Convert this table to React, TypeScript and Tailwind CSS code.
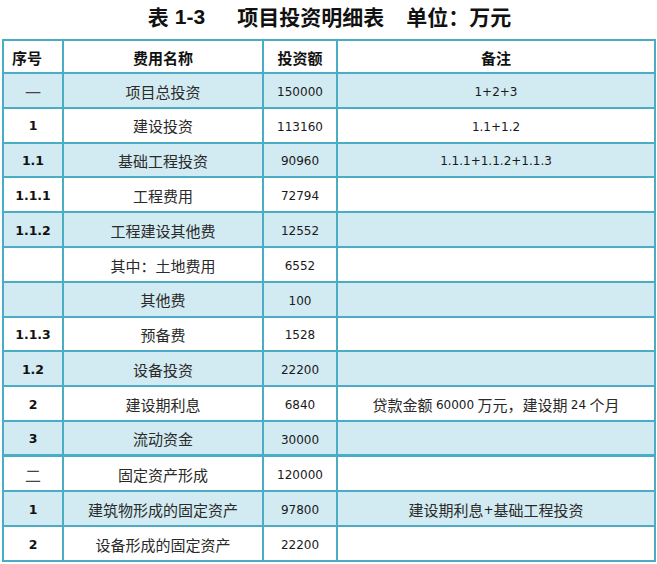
import React from "react";

type Row = { no: string; name: string; amt: string; note: string; shade: boolean; cjkNo?: boolean; thick?: boolean };

const rows: Row[] = [
  { no: "一", name: "项目总投资", amt: "150000", note: "1+2+3", shade: true, cjkNo: true },
  { no: "1", name: "建设投资", amt: "113160", note: "1.1+1.2", shade: false },
  { no: "1.1", name: "基础工程投资", amt: "90960", note: "1.1.1+1.1.2+1.1.3", shade: true },
  { no: "1.1.1", name: "工程费用", amt: "72794", note: "", shade: false },
  { no: "1.1.2", name: "工程建设其他费", amt: "12552", note: "", shade: true },
  { no: "", name: "其中：土地费用", amt: "6552", note: "", shade: false },
  { no: "", name: "其他费", amt: "100", note: "", shade: true },
  { no: "1.1.3", name: "预备费", amt: "1528", note: "", shade: false },
  { no: "1.2", name: "设备投资", amt: "22200", note: "", shade: true },
  { no: "2", name: "建设期利息", amt: "6840", note: "贷款金额 60000 万元，建设期 24 个月", shade: false },
  { no: "3", name: "流动资金", amt: "30000", note: "", shade: true, thick: true },
  { no: "二", name: "固定资产形成", amt: "120000", note: "", shade: false, cjkNo: true },
  { no: "1", name: "建筑物形成的固定资产", amt: "97800", note: "建设期利息+基础工程投资", shade: true },
  { no: "2", name: "设备形成的固定资产", amt: "22200", note: "", shade: false },
];

const cjk = "font-['Noto_Sans_CJK_SC',sans-serif]";
const num = "font-['DejaVu_Sans',sans-serif]";

function renderNote(note: string) {
  const parts = note.split(/([0-9.+]+)/).filter((p) => p !== "");
  return parts.map((p, i) =>
    /^[0-9.+]+$/.test(p) ? (
      <span key={i} className={`${num} text-[12px] text-[#1a1a1a]`}>
        {p}
      </span>
    ) : (
      <span key={i} className={`${cjk} text-[15px] text-[#2a2a2a]`}>
        {p}
      </span>
    )
  );
}

export default function App() {
  return (
    <div className="w-[657px] h-[564px] bg-white overflow-hidden">
      <div className="h-[39px] flex items-center justify-center pb-[5px] text-[21px] font-bold text-[#111] pl-[2px]">
        <span className={`${cjk}`}>表</span>
        <span className="font-['Liberation_Sans',sans-serif] ml-[6px]">1-3</span>
        <span className={`${cjk} ml-[32px]`}>项目投资明细表</span>
        <span className={`${cjk} ml-[22px]`}>单位：万元</span>
      </div>
      <div className="ml-[2px] w-[654px] border-2 border-[#4bacc6] grid grid-cols-[60px_200px_74px_316px]">
        <div className={`h-[33px] pt-[3px] border-r-2 border-b-2 border-[#4bacc6] flex items-center pl-[8px] ${cjk} font-bold text-[15px] text-[#111]`}>序号</div>
        <div className={`h-[33px] pt-[3px] border-r-2 border-b-2 border-[#4bacc6] flex items-center justify-center ${cjk} font-bold text-[15px] text-[#111]`}>费用名称</div>
        <div className={`h-[33px] pt-[3px] border-r-2 border-b-2 border-[#4bacc6] flex items-center justify-center ${cjk} font-bold text-[15px] text-[#111]`}>投资额</div>
        <div className={`h-[33px] pt-[3px] border-b-2 border-[#4bacc6] flex items-center justify-center ${cjk} font-bold text-[15px] text-[#111]`}>备注</div>
        {rows.map((r, i) => {
          const last = i === rows.length - 1;
          const bb = last ? "" : r.thick ? "border-b-[3px]" : "border-b-2";
          const bg = r.shade ? "bg-[#d2eaf1]" : "bg-white";
          const h = r.thick ? "h-[35.5px]" : last ? "h-[33px]" : "h-[34.8px]";
          return (
            <React.Fragment key={i}>
              <div className={`${h} ${bb} pt-[3px] border-r-2 border-[#4bacc6] ${bg} flex items-center justify-center`}>
                {r.cjkNo ? (
                  <span className={`${cjk} text-[16px] text-[#444]`}>{r.no}</span>
                ) : (
                  <span className={`${num} font-bold text-[12.5px] text-[#111]`}>{r.no}</span>
                )}
              </div>
              <div className={`${h} ${bb} pt-[3px] border-r-2 border-[#4bacc6] ${bg} flex items-center justify-center ${cjk} text-[15px] text-[#2a2a2a]`}>
                {r.name}
              </div>
              <div className={`${h} ${bb} pt-[3px] border-r-2 border-[#4bacc6] ${bg} flex items-center justify-center ${num} text-[12px] text-[#1a1a1a]`}>
                {r.amt}
              </div>
              <div className={`${h} ${bb} pt-[3px] border-[#4bacc6] ${bg} flex items-center justify-center whitespace-pre`}>
                {renderNote(r.note)}
              </div>
            </React.Fragment>
          );
        })}
      </div>
    </div>
  );
}
